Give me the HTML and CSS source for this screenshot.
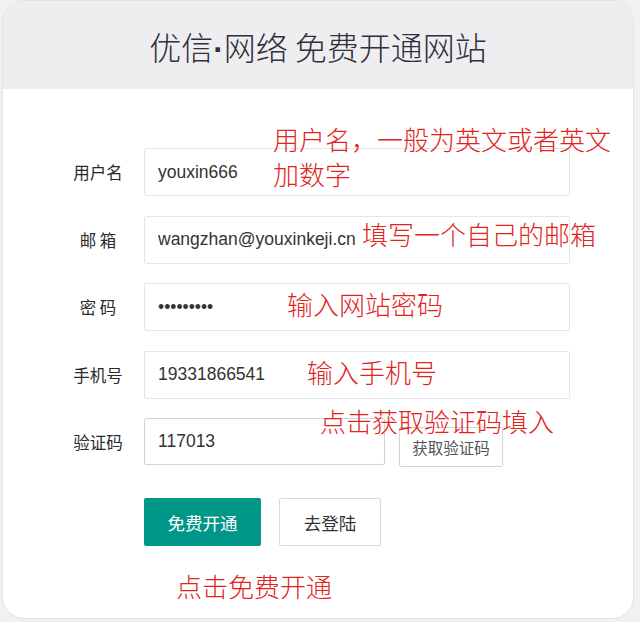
FILE: index.html
```html
<!DOCTYPE html>
<html lang="zh-CN">
<head>
<meta charset="utf-8">
<title>优信·网络 免费开通网站</title>
<link rel="stylesheet" href="styles.css">
</head>
<body>
<div class="card">
  <div class="header"><h1 class="title">优信<span class="dot">·</span>网络 免费开通网站</h1></div>
  <form class="form">
    <div class="row">
      <label class="label">用户名</label>
      <input class="field" type="text" value="youxin666">
    </div>
    <div class="row">
      <label class="label">邮 箱</label>
      <input class="field" type="text" value="wangzhan@youxinkeji.cn">
    </div>
    <div class="row">
      <label class="label">密 码</label>
      <input class="field" type="password" value="123456789">
    </div>
    <div class="row">
      <label class="label">手机号</label>
      <input class="field" type="text" value="19331866541">
    </div>
    <div class="row row-code">
      <label class="label">验证码</label>
      <input class="field field-code" type="text" value="117013">
      <button class="btn-code" type="button">获取验证码</button>
    </div>
    <div class="actions">
      <button class="btn btn-primary" type="button">免费开通</button>
      <button class="btn btn-default" type="button">去登陆</button>
    </div>
  </form>
  <div class="note note-user">用户名，一般为英文或者英文<br>加数字</div>
  <div class="note note-mail">填写一个自己的邮箱</div>
  <div class="note note-pwd">输入网站密码</div>
  <div class="note note-phone">输入手机号</div>
  <div class="note note-code">点击获取验证码填入</div>
  <div class="note note-submit">点击免费开通</div>
</div>
</body>
</html>
```
FILE: styles.css
```css
html, body {
  margin: 0;
  padding: 0;
}
body {
  background: #f1f1f3;
  width: 640px;
  height: 622px;
  overflow: hidden;
  font-family: "Noto Sans CJK SC", "Noto Sans", sans-serif;
  color: #333;
}
.card {
  position: relative;
  margin-left: 2px;
  width: 630px;
  height: 617px;
  background: #fff;
  border: 1px solid #e2e2e6;
  border-radius: 22px;
  overflow: hidden;
}
.header {
  height: 88px;
  background: #eeeef0;
  display: flex;
  align-items: center;
  justify-content: center;
}
.title {
  margin: 0;
  padding-top: 4px;
  font-size: 32px;
  font-weight: 300;
  line-height: 40px;
  color: #2f3039;
}
.dot {
  font-family: "Liberation Sans", Arial, sans-serif;
  font-weight: 700;
}
.form {
  padding: 59px 0 0 55px;
  display: flex;
  flex-direction: column;
}
.row {
  display: flex;
  align-items: center;
  margin-bottom: 19.5px;
}
.label {
  width: 80px;
  margin-right: 6px;
  text-align: center;
  font-size: 16.5px;
  color: #2a2a2a;
}
.field {
  box-sizing: border-box;
  width: 426px;
  height: 48px;
  margin: 0;
  padding: 0 0 0 13px;
  border: 1px solid #e6e6e8;
  border-radius: 2px;
  background: #fff;
  font-family: "Liberation Sans", Arial, sans-serif;
  font-size: 17.5px;
  color: #333;
  outline: none;
}
.row-code {
  align-items: flex-start;
  margin-bottom: 31px;
}
.row-code .label {
  align-self: center;
  margin-top: -2px;
}
.field-code {
  width: 241px;
  height: 47px;
  border-color: #d4d4d6;
}
.btn-code {
  box-sizing: border-box;
  margin: 9px 0 0 14px;
  width: 104px;
  height: 40px;
  border: 1px solid #d4d4d6;
  border-radius: 2px;
  background: #fff;
  font-family: "Noto Sans CJK SC", sans-serif;
  font-size: 15.5px;
  color: #555;
  padding: 0;
}
.actions {
  display: flex;
  padding-left: 86px;
}
.btn {
  box-sizing: border-box;
  height: 48px;
  border-radius: 2px;
  font-family: "Noto Sans CJK SC", sans-serif;
  font-size: 17.5px;
  padding: 0;
}
.btn-primary {
  width: 117px;
  background: #009688;
  border: none;
  color: #fff;
}
.btn-default {
  width: 102px;
  margin-left: 18px;
  background: #fff;
  border: 1px solid #d9d9db;
  color: #333;
}
.note {
  position: absolute;
  font-size: 26px;
  font-weight: 300;
  line-height: 35px;
  color: #e2241d;
  white-space: nowrap;
}
.note-user { left: 270px; top: 120px; }
.note-mail { left: 359px; top: 215px; }
.note-pwd { left: 284px; top: 285px; }
.note-phone { left: 304px; top: 353px; }
.note-code { left: 317px; top: 402px; }
.note-submit { left: 173px; top: 567px; }
```
